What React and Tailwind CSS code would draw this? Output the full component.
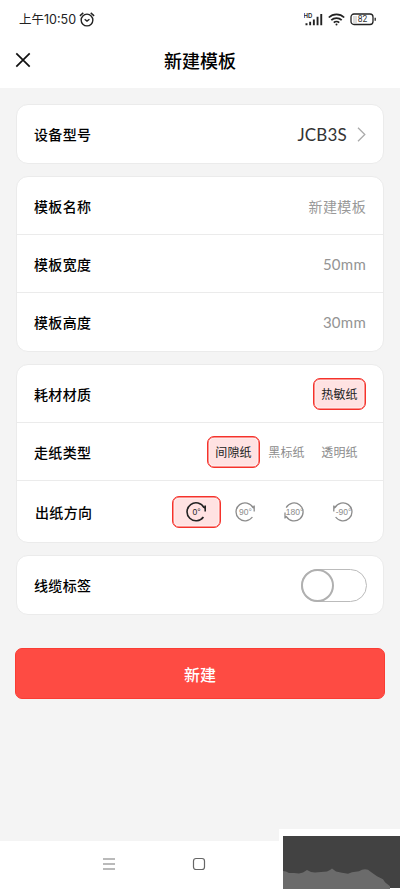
import React from "react";

function Card({ children, className = "" }) {
  return (
    <section className={`mx-4 rounded-xl border border-[#ebebeb] bg-white ${className}`}>{children}</section>
  );
}

function Row({ label, children, className = "h-[58px] pr-[17px]", labelClass = "" }) {
  return (
    <div className={`flex items-center justify-between pl-[17px] ${className}`}>
      <span className={`pt-[2px] text-[14px] font-medium tracking-[0.35px] text-black ${labelClass}`}>{label}</span>
      {children}
    </div>
  );
}

function Chip({ children, active }) {
  return (
    <span
      className={
        active
          ? "flex h-8 w-[53px] items-center justify-center rounded-[7px] border border-[#f5322b] bg-[#ffe2e2] text-[12px] tracking-[0.2px] text-[#222] shadow-[inset_0_0_0_0.5px_#f5322b,inset_0_0_0_1.5px_#fff2f2]"
          : "flex h-8 w-[53px] items-center justify-center text-[12px] tracking-[0.2px] text-[#8c8c8c]"
      }
    >
      <span className="pt-[3px]">{children}</span>
    </span>
  );
}

function Rotation({ label, arrow, color, width = 1.3 }) {
  return (
    <svg className="-ml-px" width="24" height="24" viewBox="0 0 24 24" fill="none" stroke={color} strokeWidth={width}>
      {arrow === "right" && <path d="M20 7.600A9 9 0 1 0 19.400 17M21.200 5.500v6M21.200 6.600 19.600 8" />}
      {arrow === "bottom" && <path d="M4.200 7.600A9 9 0 1 1 4.400 16.600M3 12.500v6M3 17.800l1.700-1.500" />}
      {arrow === "left" && <path d="M4 7.600A9 9 0 1 1 4.600 17M2.800 5.500v6M2.800 6.600 4.400 8" />}
      <text x="12.500" y="15.200" textAnchor="middle" fill={color} stroke="none" className="font-['Liberation_Sans',sans-serif] text-[8.5px]">
        {label}
      </text>
    </svg>
  );
}

export default function App() {
  return (
    <div className="flex h-[889px] w-[400px] flex-col overflow-hidden bg-[#f4f4f4] font-['Lato','Noto_Sans_CJK_SC',sans-serif] leading-none">
      <header className="h-[88px] shrink-0 bg-white">
        <div className="flex h-[39px] items-center justify-between pl-[19px] pr-[23px]">
          <div className="flex items-center gap-[3px] text-[#222]">
            <span className="pt-[2px] font-['Inter','Noto_Sans_CJK_SC',sans-serif] text-[12.5px]">上午10:50</span>
            <svg width="16" height="15" viewBox="0 0 15 14" fill="none" stroke="#222" strokeWidth="1.300">
              <circle cx="7.500" cy="7.500" r="5.500" />
              <path d="M.8 3.600 4 .8M14.200 3.600 11 .8M5.300 6.700l2.200 1.800 2.300-1.800" />
            </svg>
          </div>
          <div className="flex items-center gap-[5px]">
            <svg width="19" height="13" viewBox="0 0 19 13" fill="#222">
              <text x="-.5" y="4.500" className="font-['Inter',sans-serif] text-[6px] font-semibold">HD</text>
              <path d="M1.500 10.200h2v2h-2zM5.200 8.700h1.900v3.500H5.200zM8.900 6.500h1.900v5.700H8.900zM12.600 3.800h1.900v8.400h-1.900zM16.300 1h1.900v11.200h-1.900z" />
            </svg>
            <svg width="17" height="13" viewBox="0 0 17 13" fill="none" stroke="#222" strokeWidth="1.700">
              <path d="M.8 4.500c4.300-4.300 11.100-4.300 15.400 0M3.300 7.200c2.900-2.900 7.500-2.900 10.400 0M5.800 9.700c1.500-1.500 3.900-1.500 5.400 0" />
              <circle cx="8.500" cy="11.600" r="1" fill="#222" stroke="none" />
            </svg>
            <svg width="27" height="13" viewBox="0 0 27 13" fill="none">
              <rect x="3" y="3" width="4" height="7" fill="#ddd" />
              <rect x="1" y="1" width="22" height="10.500" rx="3" stroke="#222" strokeWidth="1.300" />
              <path d="M25.200 4.800v3" stroke="#222" strokeWidth="1.300" />
              <text x="12.500" y="9.200" textAnchor="middle" fill="#333" className="font-['Roboto',sans-serif] text-[8.5px]">82</text>
            </svg>
          </div>
        </div>
        <div className="grid h-[42px] grid-cols-[48px_1fr_48px] items-center">
          <svg className="ml-[15px]" width="16" height="16" viewBox="0 0 16 16" fill="none" stroke="#111" strokeWidth="1.700">
            <path d="M1.300 1.300l13.400 13.400M14.700 1.300 1.300 14.700" />
          </svg>
          <h1 className="pt-[2px] text-center text-[18px] font-medium text-black">新建模板</h1>
        </div>
      </header>

      <main className="flex flex-1 flex-col gap-3 pt-4">
        <Card>
          <Row label="设备型号">
            <span className="flex items-center gap-[10px]">
              <span className="text-[17px] tracking-[0.2px] text-[#333]">JCB3S</span>
              <svg width="9" height="15" viewBox="0 0 9 15" fill="none" stroke="#aaa" strokeWidth="1.300">
                <path d="M1 .8 7.800 7.500 1 14.200" />
              </svg>
            </span>
          </Row>
        </Card>

        <Card className="divide-y divide-[#ebebeb]">
          <Row label="模板名称">
            <span className="pt-[2px] text-[14px] tracking-[0.35px] text-[#999]">新建模板</span>
          </Row>
          <Row label="模板宽度">
            <span className="pt-[2px] text-[15px] tracking-[0.25px] text-[#949494]">50mm</span>
          </Row>
          <Row label="模板高度">
            <span className="pt-px text-[15px] tracking-[0.25px] text-[#949494]">30mm</span>
          </Row>
        </Card>

        <Card className="divide-y divide-[#ebebeb]">
          <Row label="耗材材质">
            <Chip active>热敏纸</Chip>
          </Row>
          <Row label="走纸类型">
            <span className="flex">
              <Chip active>间隙纸</Chip>
              <Chip>黑标纸</Chip>
              <Chip>透明纸</Chip>
            </span>
          </Row>
          <Row label="出纸方向" className="h-[61px] pr-[15px]" labelClass="ml-px">
            <span className="flex">
              <span className="flex h-8 w-[49px] items-center justify-center rounded-[7px] border border-[#f5322b] bg-[#ffe2e2] shadow-[inset_0_0_0_0.5px_#f5322b,inset_0_0_0_1.5px_#fff2f2]">
                <Rotation label="0°" arrow="right" color="#222" width={1.6} />
              </span>
              <span className="flex h-8 w-[49px] items-center justify-center"><Rotation label="90°" arrow="right" color="#8c8c8c" /></span>
              <span className="flex h-8 w-[49px] items-center justify-center"><Rotation label="180°" arrow="bottom" color="#8c8c8c" /></span>
              <span className="flex h-8 w-[49px] items-center justify-center"><Rotation label="-90°" arrow="left" color="#8c8c8c" /></span>
            </span>
          </Row>
        </Card>

        <Card>
          <Row label="线缆标签" className="h-[58px] pr-4">
            <span className="flex h-[33px] w-[66px] rounded-full border border-[#bbb]">
              <span className="-ml-px -mt-px size-[33px] rounded-full border-2 border-[#b0b0b0] bg-white" />
            </span>
          </Row>
        </Card>

        <button className="mx-[15px] mt-[21px] h-[51px] rounded-[7px] border border-[#fa3c33] bg-[#fe4b43] pt-[2px] text-[16px] font-medium text-white">新建</button>
      </main>

      <footer className="relative flex h-12 shrink-0 items-center bg-white">
        <svg className="mb-[2px] ml-[103px]" width="12" height="12" viewBox="0 0 12 12" stroke="#777" strokeWidth="1.200">
          <path d="M0 1h12M0 6h12M0 11h12" />
        </svg>
        <svg className="mb-[2px] ml-[77px]" width="14" height="14" viewBox="0 0 14 14" fill="none" stroke="#666" strokeWidth="1.200">
          <rect x="1.500" y="1.500" width="11" height="11" rx="2.500" />
        </svg>
        <div className="absolute bottom-0 right-0 h-[60px] w-[121px] bg-white pl-1 pt-[7px]">
          <svg width="117" height="53" viewBox="0 0 117 53">
            <path d="M0 0h117v52H0z" fill="#424242" />
            <path d="M0 35l3 .5 3 1.500h5l5 .5 4-1 4-2.500 4 2 4 .5 6-.5 6-.5 3-1.500 2-1.500 4 3 6 1.300 6 1 4-1.500 7-1 3-1.500 3-.5 3 .5 4 3 5 3.500 6 3 2 3 5 4v2.700H0z" fill="#6b6b6b" />
          </svg>
        </div>
      </footer>
    </div>
  );
}
